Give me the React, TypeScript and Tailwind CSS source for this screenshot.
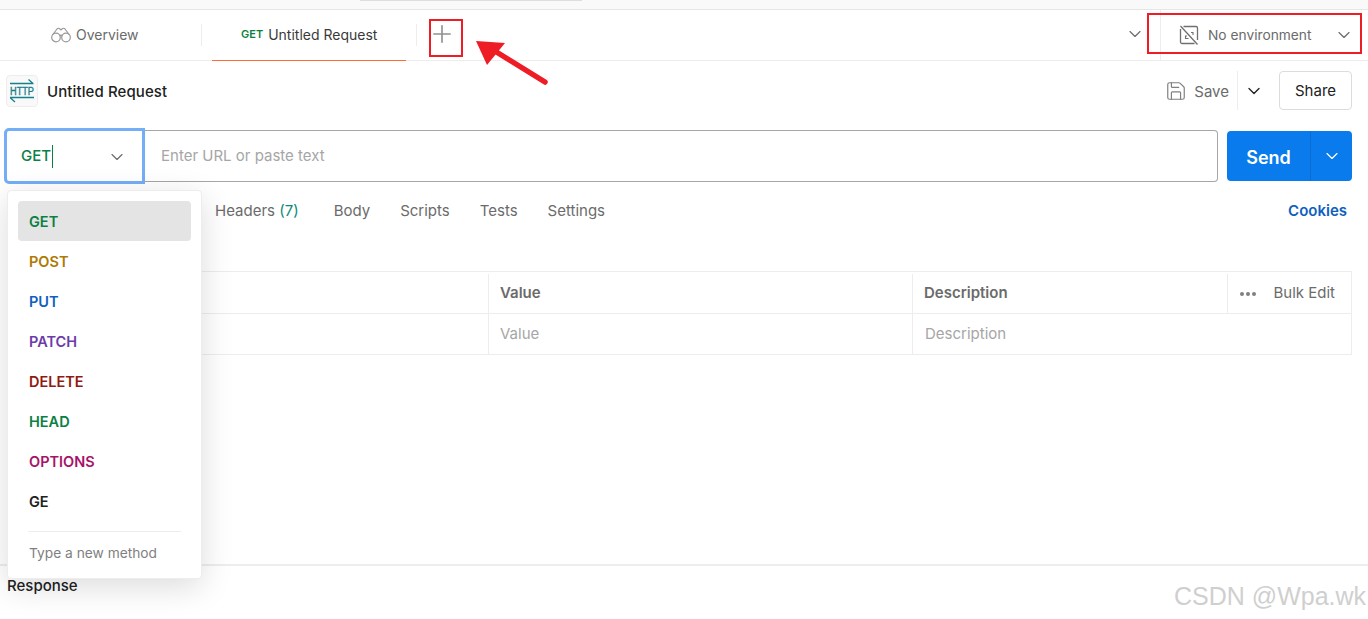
import React from "react";
import { ChevronDown, Plus, Save } from "lucide-react";

const methods = [
  { name: "GET", color: "text-[#0b8043]", bg: "bg-[#e4e4e4]" },
  { name: "POST", color: "text-[#ad7a03]", bg: "" },
  { name: "PUT", color: "text-[#0f5fc0]", bg: "" },
  { name: "PATCH", color: "text-[#6c3ba8]", bg: "" },
  { name: "DELETE", color: "text-[#8e1a10]", bg: "" },
  { name: "HEAD", color: "text-[#0b8043]", bg: "" },
  { name: "OPTIONS", color: "text-[#a61468]", bg: "" },
  { name: "GE", color: "text-[#212121]", bg: "" },
];

const BinocularsIcon = () => (
  <svg width="20" height="16" viewBox="0 0 20 16" fill="none" stroke="#9a9a9a" strokeWidth="1.2">
    <circle cx="5" cy="10.5" r="4.3" />
    <circle cx="15" cy="10.5" r="4.3" />
    <path d="M1.5 8 L6 2 Q7 0.8 8.5 1.5 L10 3 L11.5 1.5 Q13 0.8 14 2 L18.5 8" />
    <path d="M8.5 9 Q10 7.5 11.5 9" />
  </svg>
);

const NoEnvIcon = () => (
  <svg width="20" height="20" viewBox="0 0 20 20" fill="none" stroke="#6f6f6f" strokeWidth="1.3">
    <path d="M4.5 1.5H17C17.8 1.5 18.5 2.2 18.5 3V15M15.5 18.5H3C2.2 18.5 1.5 17.8 1.5 17V4" />
    <path d="M1.5 1L18.5 19.5" />
    <path d="M8 11H6.5V13.5H9.5M12 7.5H14V10" strokeWidth="1.1" />
  </svg>
);

const HttpIcon = () => (
  <svg width="26" height="26" viewBox="0 0 26 26" fill="none" stroke="#16808c" strokeWidth="1.3">
    <path d="M1 5.5H24.5M19.5 1.5L24 5.5" />
    <path d="M1 19.5H25M1.5 20L6 24" />
    <text transform="translate(1 16.5) scale(1 1.25)" fontFamily="Liberation Sans" fontSize="9.2" fill="#16808c" stroke="#16808c" strokeWidth="0.3">HTTP</text>
  </svg>
);

const ArrowMark = () => (
  <svg className="absolute left-[470px] top-[36px]" width="84" height="54" viewBox="0 0 84 54" fill="none">
    <path d="M75 46L20 12" stroke="#ee1c25" strokeWidth="5.5" strokeLinecap="round" />
    <path d="M6 5L35 7L17 29Z" fill="#ee1c25" />
  </svg>
);

const TableCell = ({ className, children }: { className: string; children: React.ReactNode }) => (
  <div className={`flex items-center px-[11px] ${className}`}>{children}</div>
);

export default function App() {
  return (
    <div className="relative h-[619px] w-full overflow-hidden bg-white font-['Inter',sans-serif] text-[15px] text-[#212121]">
      {/* Top strip */}
      <div className="h-[10px] border-b border-[#e6e6e6] bg-[#f9f9f9] pl-[360px]">
        <div className="h-[1px] w-[222px] bg-[#dedede]" />
      </div>

      {/* Tabs row */}
      <div className="flex h-[51px] items-stretch border-b border-[#ededed] text-[14px]">
        <div className="flex w-[201px] items-center gap-[5px] pb-[1px] pl-[51px] text-[#6b6b6b]">
          <BinocularsIcon />
          <span>Overview</span>
        </div>
        <div className="my-[14px] w-px bg-[#ededed]" />
        <div className="relative ml-[10px] flex w-[194px] items-center gap-[5px] pb-[1px] pl-[29px]">
          <span className="text-[11px] font-semibold text-[#0b8043]">GET</span>
          <span className="text-[#3a3a3a]">Untitled Request</span>
          <div className="absolute bottom-[-1px] left-0 right-0 h-px bg-[#ff6c37]" />
        </div>
        <div className="my-[14px] ml-[10px] w-px bg-[#ededed]" />
        <div className="ml-[11px] flex items-center pb-[2px] text-[#909090]">
          <Plus size={28} strokeWidth={1.4} />
        </div>
        <div className="flex-1" />
        <div className="flex items-center pb-[2px] pr-[15px] text-[#6b6b6b]">
          <ChevronDown size={20} strokeWidth={1.4} />
        </div>
        <div className="flex w-[208px] items-center border-l border-[#ededed] pl-[18px] text-[#6b6b6b]">
          <NoEnvIcon />
          <span className="ml-[9px] text-[13.75px]">No environment</span>
          <ChevronDown size={20} strokeWidth={1.4} className="ml-[23px]" />
        </div>
      </div>

      {/* Request title */}
      <div className="flex h-[59px] items-center justify-between pl-[6px] pr-[16px]">
        <div className="flex items-center gap-[9px]">
          <div className="flex h-[32px] w-[32px] items-center justify-center rounded-[4px] border border-[#ededed] bg-[#f9f9f9]">
            <HttpIcon />
          </div>
          <span className="pt-[3px] font-medium tracking-[0.1px]">Untitled Request</span>
        </div>
        <div className="flex items-center">
          <Save size={22} strokeWidth={1.3} className="text-[#808080]" />
          <span className="ml-[7px] pt-[3px] text-[#6b6b6b]">Save</span>
          <div className="ml-[8px] h-[39px] w-px bg-[#ededed]" />
          <ChevronDown size={20} strokeWidth={1.6} className="ml-[6px] text-[#212121]" />
          <div className="ml-[15px] flex h-[39px] w-[73px] items-center justify-center rounded-[4px] border border-[#dcdcdc] pt-[2px]">
            Share
          </div>
        </div>
      </div>

      {/* URL row */}
      <div className="flex h-[72px] items-center pl-[4px] pr-[16px]">
        <div className="flex h-[52px] flex-1 rounded-r-[4px] rounded-l-[5px] border border-l-0 border-[#a6a6a6]">
          <div className="-mt-[3px] flex h-[56px] w-[141px] shrink-0 items-center justify-between rounded-l-[5px] border-[3px] border-[#74aef6] bg-white pl-[14px] pr-[15px] pt-[1px]">
            <span className="border-r border-[#0b8043] pr-px font-medium text-[#0b8043]">GET</span>
            <ChevronDown size={20} strokeWidth={1.4} className="text-[#6b6b6b]" />
          </div>
          <div className="flex items-center pl-[16px] pt-[1px] text-[#a6a6a6]">Enter URL or paste text</div>
        </div>
        <div className="ml-[9px] flex h-[50px] w-[125px] rounded-[4px] bg-[#097bed] text-white">
          <div className="flex w-[84px] items-center justify-center border-r border-[#0a6dcf] pt-[2px] text-[18px] font-semibold">Send</div>
          <div className="flex flex-1 items-center justify-center">
            <ChevronDown size={20} strokeWidth={1.4} />
          </div>
        </div>
      </div>

      {/* Request option tabs */}
      <div className="mt-[4px] flex h-[30px] items-center justify-between pl-[215px] pr-[21px] text-[#6b6b6b]">
        <div className="flex items-center">
          <span>Headers <span className="text-[#0b8a7c]">(7)</span></span>
          <span className="ml-[35px]">Body</span>
          <span className="ml-[30px]">Scripts</span>
          <span className="ml-[30px]">Tests</span>
          <span className="ml-[30px]">Settings</span>
        </div>
        <span className="font-semibold text-[#0f5fc0]">Cookies</span>
      </div>

      {/* Params table */}
      <div className="ml-[100px] mr-[16px] mt-[45px] border border-b-0 border-[#ededed]">
        <div className="flex h-[42px] border-b border-[#ededed] pt-[2px] font-semibold text-[#6b6b6b]">
          <div className="w-[388px] border-r border-[#ededed]" />
          <TableCell className="w-[424px] border-r border-[#ededed]">Value</TableCell>
          <TableCell className="w-[315px] border-r border-[#ededed]">Description</TableCell>
          <div className="flex flex-1 items-center justify-between pl-[12px] pr-[16px] font-normal">
            <div className="flex gap-[2px]">
              <div className="h-[4px] w-[4px] rounded-full bg-[#808080]" />
              <div className="h-[4px] w-[4px] rounded-full bg-[#808080]" />
              <div className="h-[4px] w-[4px] rounded-full bg-[#808080]" />
            </div>
            <span>Bulk Edit</span>
          </div>
        </div>
        <div className="flex h-[41px] border-b border-[#ededed] text-[#a6a6a6]">
          <div className="w-[388px] border-r border-[#ededed]" />
          <TableCell className="w-[424px] border-r border-[#ededed]">Value</TableCell>
          <TableCell className="flex-1 !px-[12px]">Description</TableCell>
        </div>
      </div>

      {/* Response bar */}
      <div className="mt-[209px] border-t-2 border-[#ededed] pl-[7px] pt-[9px] font-medium">Response</div>

      {/* Method dropdown */}
      <div className="absolute left-[7px] top-[190px] w-[195px] rounded-[4px] border border-[#ededed] bg-white px-[10px] pt-[10px] text-[14.5px] shadow-[0_8px_32px_rgba(0,0,0,0.14)]">
        {methods.map((m) => (
          <div key={m.name} className={`flex h-[40px] items-center rounded-[4px] pl-[11px] pt-[2px] font-semibold ${m.color} ${m.bg}`}>
            {m.name}
          </div>
        ))}
        <div className="mx-[10px] mt-[10px] h-px bg-[#ededed]" />
        <div className="flex h-[46px] items-center pb-[3px] pl-[11px] text-[13.75px] text-[#808080]">Type a new method</div>
      </div>

      {/* Annotations */}
      <div className="absolute left-[429px] top-[19px] h-[38px] w-[34px] border-2 border-[#ee1c25]" />
      <div className="absolute left-[1147px] top-[13px] h-[41px] w-[215px] border-2 border-[#ee1c25]" />
      <ArrowMark />

      {/* Watermark */}
      <div className="absolute left-[1174px] top-[581px] whitespace-nowrap font-['Liberation_Sans',sans-serif] text-[25px] leading-[30px] text-[#cfcfcf]">
        CSDN @Wpa.wk
      </div>
    </div>
  );
}
